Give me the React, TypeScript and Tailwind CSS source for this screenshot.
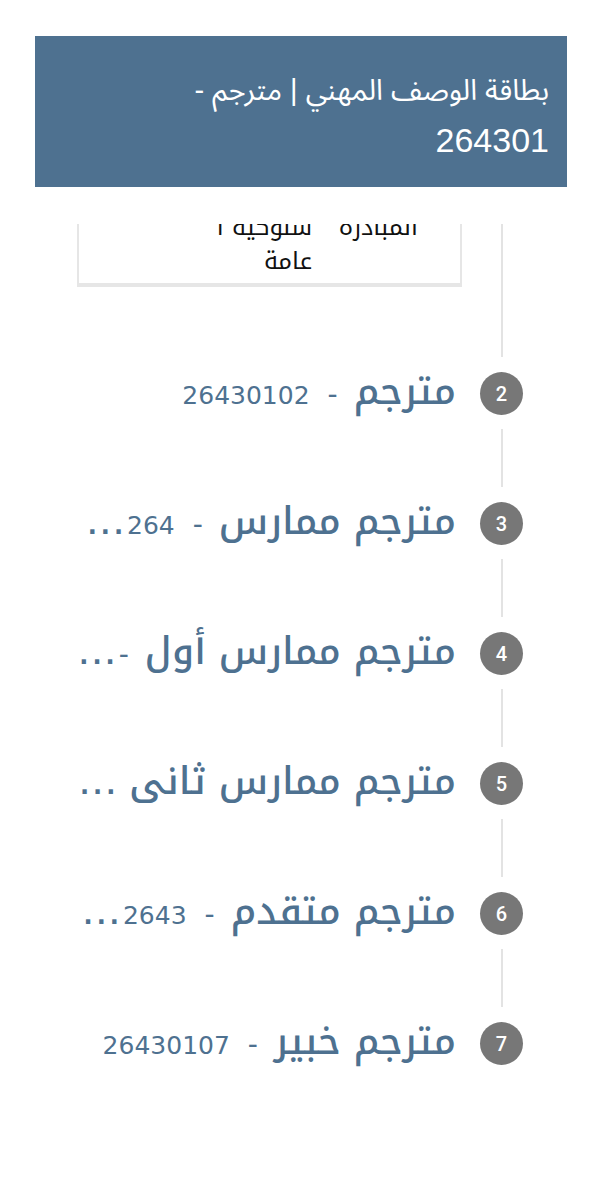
import React from "react";

type Item = { n: string; a: string; dash: boolean; num: string; dots: boolean; dashTight?: boolean };

const items: Item[] = [
  { n: "2", a: "مترجم", dash: true, num: "26430102", dots: false },
  { n: "3", a: "مترجم ممارس", dash: true, num: "264", dots: true },
  { n: "4", a: "مترجم ممارس أول", dash: true, num: "", dots: true, dashTight: true },
  { n: "5", a: "مترجم ممارس ثانى", dash: false, num: "", dots: true },
  { n: "6", a: "مترجم متقدم", dash: true, num: "2643", dots: true },
  { n: "7", a: "مترجم خبير", dash: true, num: "26430107", dots: false },
];

function Dots({ cls }: { cls: string }) {
  return (
    <span className={cls}>
      <span className="inline-flex gap-[4px]">
        <span>.</span>
        <span>.</span>
        <span>.</span>
      </span>
    </span>
  );
}

export default function App() {
  return (
    <div dir="rtl" className="w-[596px] min-h-[1200px] bg-white">
      <div className="ml-[35px] mr-[29px] pt-[36px]">
        <div className="bg-[#4e7190] text-white pr-[18px] pl-[18px] pt-[29px] pb-[22px] leading-[50px] font-['Liberation_Sans','Noto_Sans_Arabic',sans-serif]">
          <div className="text-[29px]">بطاقة الوصف المهني | مترجم -</div>
          <div className="text-[34px]">264301</div>
        </div>
      </div>

      <div className="mt-[37px] pr-[73px] pl-[77px] font-['Noto_Kufi_Arabic','DejaVu_Sans',sans-serif]">
        {/* first, partially scrolled item */}
        <div className="flex gap-[21px]">
          <div className="w-[43px] flex flex-col items-center shrink-0">
            <div className="w-[2px] h-[133px] bg-[#e3e3e3]" />
            <div className="h-[15px]" />
          </div>
          <div className="flex-1">
            <div className="-mr-[3px] h-[63px] overflow-hidden border-x-2 border-b-4 border-t-0 border-[#e6e6e6]">
              <div className="-mt-[14px] flex text-[24px] leading-[34px] text-[#111]">
                <div className="w-[42px]" />
                <div className="w-[106px] text-right">المبادرة</div>
                <div className="text-right">
                  <div>سلوكية ا</div>
                  <div>عامة</div>
                </div>
              </div>
            </div>
          </div>
        </div>

        {items.map((it, i) => (
          <div key={it.n} className="flex gap-[24px]">
            <div className="w-[43px] flex flex-col items-center shrink-0">
              <div className="w-[43px] h-[43px] rounded-full bg-[#777777] text-white flex items-center justify-center text-[20px] font-medium font-['Roboto',sans-serif]">
                {it.n}
              </div>
              {i < items.length - 1 && (
                <div className="mt-[14px] mb-[15px] w-[2px] h-[58px] bg-[#e3e3e3]" />
              )}
            </div>
            <div className="flex-1 min-w-0 h-[43px] flex items-center">
              <div className="whitespace-nowrap text-[38px] leading-[43px] font-medium text-[#4e7190]">
                <span>{it.a}</span>
                {it.dash && (
                  <span
                    className={
                      it.dashTight
                        ? "mr-[16px] ml-[4px] text-[28px] font-['DejaVu_Sans',sans-serif]"
                        : "mr-[16px] ml-[18px] text-[28px] font-['DejaVu_Sans',sans-serif]"
                    }
                  >
                    -
                  </span>
                )}
                {it.num && <span className="text-[25px] font-['DejaVu_Sans',sans-serif]">{it.num}</span>}
                {it.dots && (
                  <Dots
                    cls={
                      it.num
                        ? "mr-[4px] text-[24px] font-bold font-['DejaVu_Sans',sans-serif]"
                        : it.dash
                        ? "text-[24px] font-bold font-['DejaVu_Sans',sans-serif]"
                        : "mr-[14px] text-[24px] font-bold font-['DejaVu_Sans',sans-serif]"
                    }
                  />
                )}
              </div>
            </div>
          </div>
        ))}
      </div>
    </div>
  );
}
